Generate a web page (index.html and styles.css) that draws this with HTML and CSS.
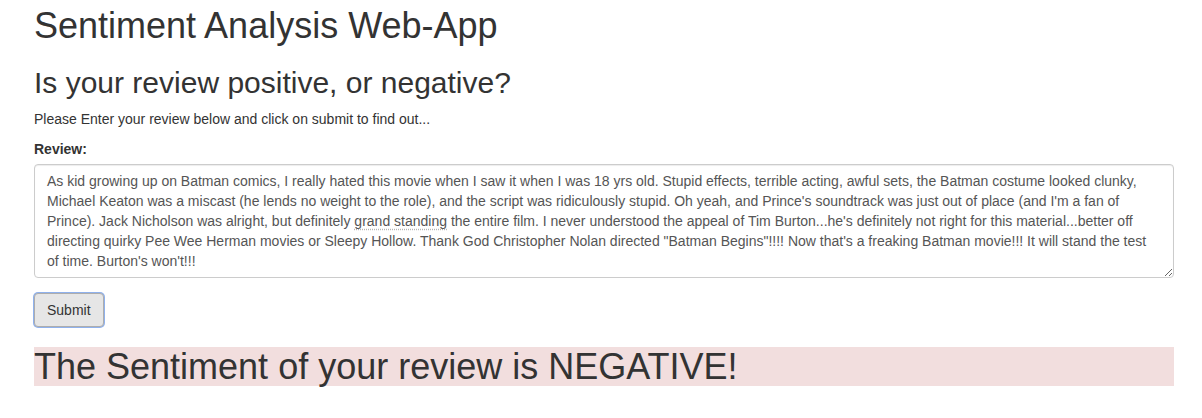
FILE: index.html
```html
<!DOCTYPE html>
<html lang="en">
<head>
<meta charset="utf-8">
<title>Sentiment Analysis Web-App</title>
<link rel="stylesheet" href="styles.css">
</head>
<body>
<div class="container">
  <h1 class="title">Sentiment Analysis Web-App</h1>
  <h2 class="subtitle">Is your review positive, or negative?</h2>
  <p class="intro">Please Enter your review below and click on submit to find out...</p>
  <form class="form">
    <div class="form-group">
      <label class="label" for="review">Review:</label>
      <div class="form-control review" id="review" role="textbox" aria-multiline="true">As kid growing up on Batman comics, I really hated this movie when I saw it when I was 18 yrs old. Stupid effects, terrible acting, awful sets, the Batman costume looked clunky, Michael Keaton was a miscast (he lends no weight to the role), and the script was ridiculously stupid. Oh yeah, and Prince's soundtrack was just out of place (and I'm a fan of Prince). Jack Nicholson was alright, but definitely <span class="spell">grand standing</span> the entire film. I never understood the appeal of Tim Burton...he's definitely not right for this material...better off directing quirky Pee Wee Herman movies or Sleepy Hollow. Thank God Christopher Nolan directed "Batman Begins"!!!! Now that's a freaking Batman movie!!! It will stand the test of time. Burton's won't!!!</div>
    </div>
    <button type="button" class="btn">Submit</button>
  </form>
  <h1 class="result">The Sentiment of your review is NEGATIVE!</h1>
</div>
</body>
</html>
```
FILE: styles.css
```css
* { box-sizing: border-box; }
html, body { margin: 0; padding: 0; background: #fff; }
body {
  font-family: "Liberation Sans", Arial, Helvetica, sans-serif;
  font-size: 14px;
  line-height: 1.42857143;
  color: #333;
}
.container {
  width: 1140px;
  margin-left: 34px;
  padding-top: 1px;
}
.title, .result {
  font-size: 36px;
  font-weight: 500;
  line-height: 1.1;
  margin: 0 0 10px;
}
.title { margin-top: 5px; }
.subtitle {
  font-size: 30px;
  font-weight: 500;
  line-height: 1.1;
  margin: 20px 0 10px;
}
.intro { margin: 0 0 10px; }
.form { margin: 0; }
.form-group { margin-bottom: 15px; }
.label {
  display: inline-block;
  font-weight: bold;
  margin-bottom: 5px;
}
.form-control {
  display: block;
  width: 100%;
  height: 114px;
  padding: 6px 12px;
  font-size: 14px;
  line-height: 20px;
  color: #555;
  background: #fff;
  border: 1px solid #ccc;
  border-radius: 4px;
  box-shadow: inset 0 1px 1px rgba(0,0,0,.075);
  overflow: auto;
  resize: vertical;
  white-space: pre-wrap;
}
.spell {
  text-decoration: underline dotted #b5b5b5;
  text-underline-offset: 3px;
}
.btn {
  display: block;
  font-family: inherit;
  font-size: 14px;
  line-height: 20px;
  padding: 6px 12px;
  color: #333;
  background: #e6e6e6;
  border: 1px solid #adadad;
  border-radius: 4px;
  box-shadow: 0 0 0 1px #8fb1ec;
  cursor: pointer;
}
.result {
  margin-top: 20px;
  background: #f2dede;
}
```
